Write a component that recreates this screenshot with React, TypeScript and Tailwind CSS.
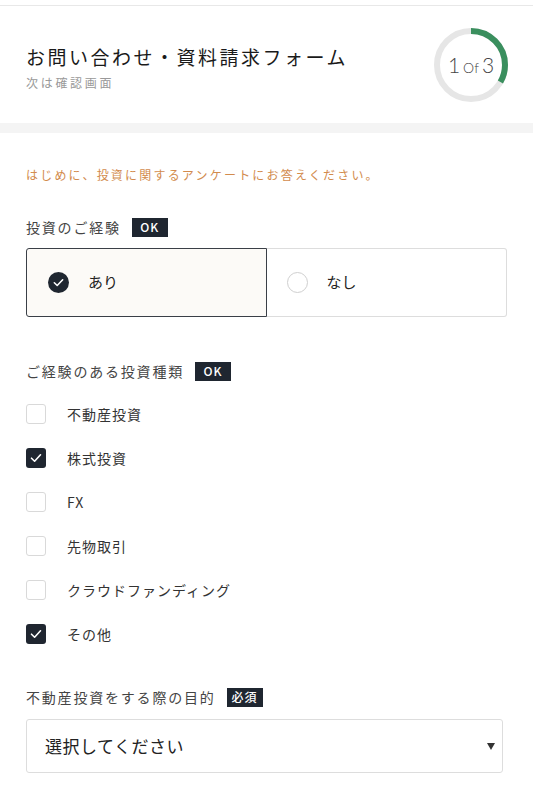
import React, { useState } from 'react';

const FONT = { fontFamily: '"Noto Sans CJK JP", "Noto Sans", sans-serif' };

function Badge({ children }: { children: React.ReactNode }) {
  return (
    <span className="ml-[11px] inline-flex h-[19px] w-[36px] items-center justify-center bg-[#1f2630] text-[12px] leading-none font-medium tracking-[1px] text-white">
      {children}
    </span>
  );
}

function Label({ text, badge }: { text: string; badge: string }) {
  return (
    <div className="flex h-[20px] items-center">
      <span className="text-[14px] leading-[20px] tracking-[1.8px] text-[#444]">{text}</span>
      <Badge>{badge}</Badge>
    </div>
  );
}

function Progress() {
  const r = 34;
  const c = 2 * Math.PI * r;
  return (
    <div className="relative h-[74px] w-[74px]">
      <svg width="74" height="74" viewBox="0 0 74 74" className="absolute inset-0">
        <circle cx="37" cy="37" r={r} fill="none" stroke="#e6e6e6" strokeWidth="6" />
        <circle
          cx="37"
          cy="37"
          r={r}
          fill="none"
          stroke="#3a8f5e"
          strokeWidth="6"
          strokeDasharray={`${c / 3} ${c}`}
          transform="rotate(-90 37 37)"
        />
      </svg>
      <div
        className="absolute inset-0 flex items-baseline justify-center pt-[26px] font-light text-[#444]"
        style={{ fontFamily: 'Lato, sans-serif' }}
      >
        <span className="text-[21px] leading-none">1</span>
        <span className="mx-[3px] text-[14px] leading-none">Of</span>
        <span className="text-[21px] leading-none">3</span>
      </div>
    </div>
  );
}

function Check({ on }: { on: boolean }) {
  return (
    <span
      className={
        on
          ? 'flex h-[20px] w-[20px] items-center justify-center rounded-[3px] bg-[#1f2630]'
          : 'flex h-[20px] w-[20px] rounded-[3px] border border-[#d9d9d9] bg-white'
      }
    >
      {on && (
        <svg width="14" height="14" viewBox="0 0 14 14">
          <path d="M2.5 7.2 L5.6 10.2 L11.5 3.8" fill="none" stroke="white" strokeWidth="1.6" strokeLinecap="round" strokeLinejoin="round" />
        </svg>
      )}
    </span>
  );
}

function Dot({ on }: { on: boolean }) {
  return on ? (
    <span className="flex h-[21px] w-[21px] items-center justify-center rounded-full bg-[#1f2630]">
      <svg width="13" height="13" viewBox="0 0 14 14">
        <path d="M2.5 7.3 L5.6 10.2 L11.5 4" fill="none" stroke="white" strokeWidth="1.7" strokeLinecap="round" strokeLinejoin="round" />
      </svg>
    </span>
  ) : (
    <span className="h-[21px] w-[21px] rounded-full border border-[#cfcfcf]" />
  );
}

const kinds = ['不動産投資', '株式投資', 'FX', '先物取引', 'クラウドファンディング', 'その他'];

export default function App() {
  const [exp, setExp] = useState(true);
  const [checked, setChecked] = useState<boolean[]>([false, true, false, false, false, true]);

  return (
    <div className="min-h-[800px] bg-white" style={FONT}>
      <div className="h-[5px]" />
      <header className="flex h-[118px] items-center justify-between border-t border-[#e8e8e8] pr-[25px] pl-[26px]">
        <div className="pt-[6px]">
          <h1 className="text-[19px] leading-[28px] font-normal tracking-[2.5px] text-[#1a1a1a]">
            お問い合わせ・資料請求フォーム
          </h1>
          <p className="mt-[3px] text-[12px] leading-[18px] tracking-[2.7px] text-[#999]">次は確認画面</p>
        </div>
        <Progress />
      </header>
      <div className="h-[10px] bg-[#f4f4f4]" />

      <main className="px-[26px] pt-[32px] pb-[30px]">
        <p className="text-[12px] leading-[20px] tracking-[2.2px] text-[#d28b4d]">
          はじめに、投資に関するアンケートにお答えください。
        </p>

        <div className="mt-[32px]">
          <Label text="投資のご経験" badge="OK" />
          <div className="mt-[11px] grid h-[69px] grid-cols-2">
            <button
              onClick={() => setExp(true)}
              className={
                exp
                  ? 'flex items-center rounded-l-[3px] border border-[#3a3f47] bg-[#fcfaf7] pl-[21px]'
                  : 'flex items-center rounded-l-[3px] border border-r-0 border-[#dddddd] bg-white pl-[21px]'
              }
            >
              <Dot on={exp} />
              <span className="ml-[19px] text-[15px] text-[#222]">あり</span>
            </button>
            <button
              onClick={() => setExp(false)}
              className={
                exp
                  ? 'flex items-center rounded-r-[3px] border border-l-0 border-[#dddddd] bg-white pl-[20px]'
                  : 'flex items-center rounded-r-[3px] border border-[#3a3f47] bg-[#fcfaf7] pl-[20px]'
              }
            >
              <Dot on={!exp} />
              <span className="ml-[19px] text-[15px] text-[#222]">なし</span>
            </button>
          </div>
        </div>

        <div className="mt-[44px]">
          <Label text="ご経験のある投資種類" badge="OK" />
          <ul className="mt-[23px] flex flex-col gap-[24px]">
            {kinds.map((k, i) => (
              <li
                key={k}
                className="flex h-[20px] cursor-pointer items-center"
                onClick={() => setChecked((c) => c.map((v, j) => (j === i ? !v : v)))}
              >
                <Check on={checked[i]} />
                <span className="ml-[21px] text-[14px] leading-[20px] tracking-[1px] text-[#333]">{k}</span>
              </li>
            ))}
          </ul>
        </div>

        <div className="mt-[43px]">
          <Label text="不動産投資をする際の目的" badge="必須" />
          <div className="mt-[12px] flex h-[54px] w-[477px] items-center justify-between rounded-[3px] border border-[#dddddd] pr-[7px] pl-[18px]">
            <span className="text-[17px] tracking-[0.5px] text-[#222]">選択してください</span>
            <svg width="8" height="7" viewBox="0 0 8 7">
              <path d="M0 0 H8 L4 7 Z" fill="#333" />
            </svg>
          </div>
        </div>
      </main>
    </div>
  );
}
